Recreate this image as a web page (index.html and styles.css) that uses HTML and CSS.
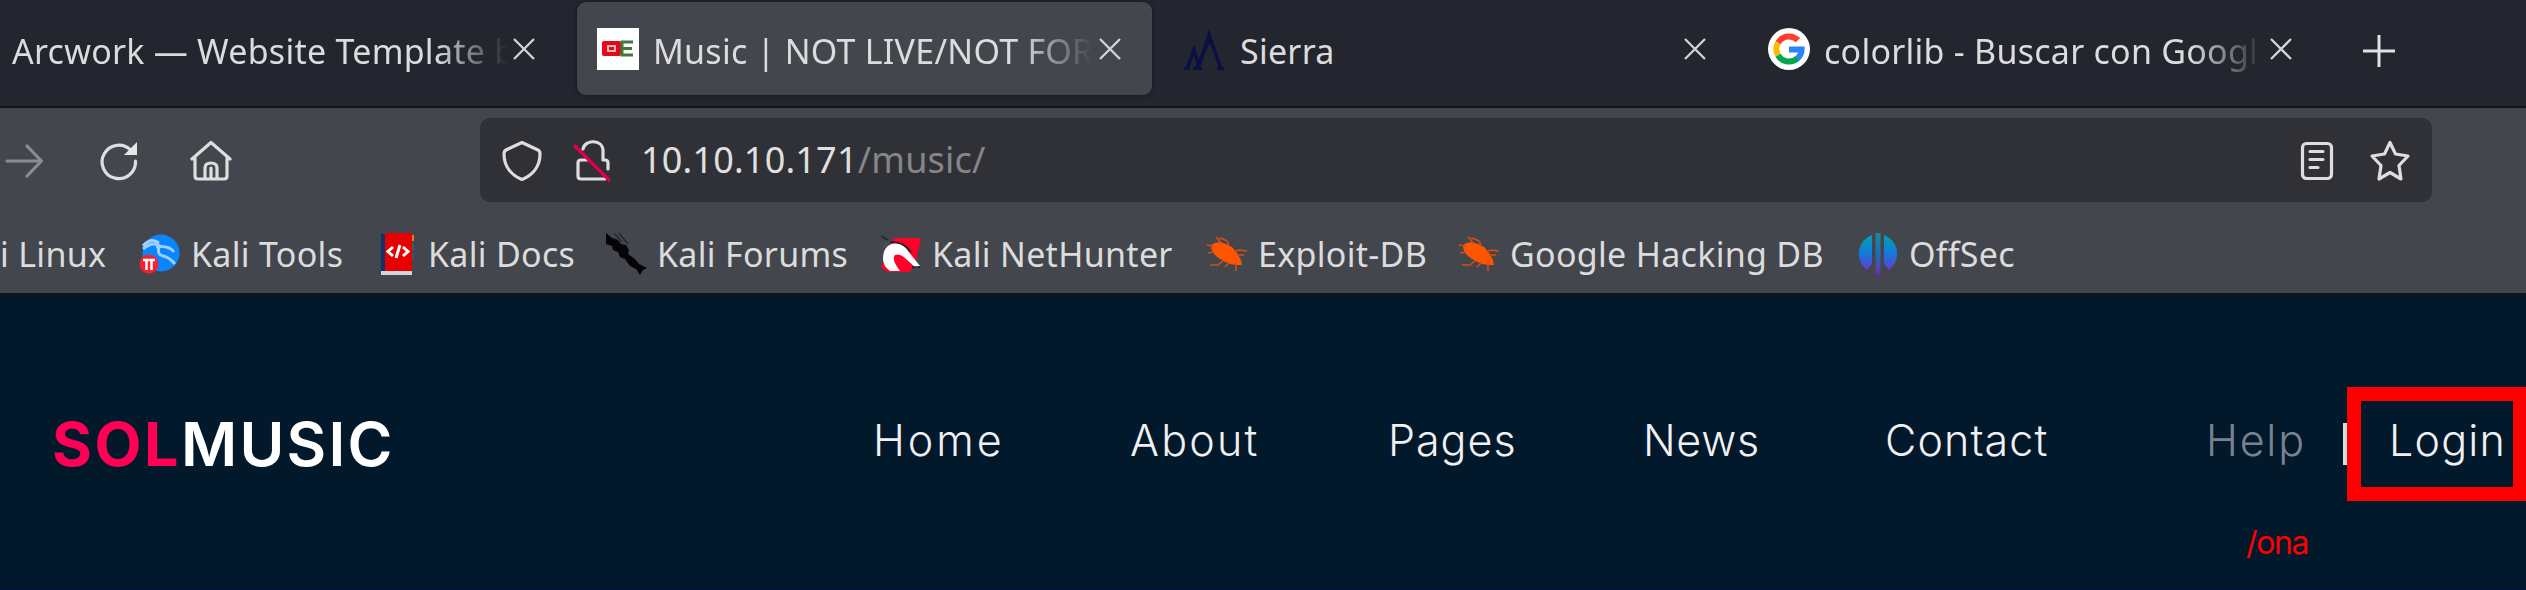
FILE: index.html
```html
<!DOCTYPE html>
<html lang="en">
<head>
<meta charset="utf-8">
<title>Music</title>
<link rel="stylesheet" href="styles.css">
</head>
<body>
<div class="window">
  <div class="tabs">
    <div class="tab tab-first">
      <span class="tab-title fade">Arcwork — Website Template b</span>
      <svg class="close" viewBox="0 0 22 22"><path d="M1 1L21 21M21 1L1 21"/></svg>
    </div>
    <div class="tab tab-active">
      <svg class="fav" viewBox="0 0 42 42"><path fill="#fff" d="M0 0h42v42H0z"/><rect x="5" y="13" width="19" height="15" rx="2" fill="#e30a17"/><path fill="none" stroke="#f4b8b8" stroke-width="2" d="M10 18h9M10 23h9M11 17v7M18 17v7"/><path fill="none" stroke="#3c7a3c" stroke-width="3" d="M36 14H25v13h11M25 20.500h10"/></svg>
      <span class="tab-title fade">Music | NOT LIVE/NOT FOR</span>
      <svg class="close" viewBox="0 0 22 22"><path d="M1 1L21 21M21 1L1 21"/></svg>
    </div>
    <div class="tab tab-sierra">
      <svg class="fav" viewBox="0 0 42 42"><path fill="none" stroke="#0a1046" stroke-width="3.500" d="M3 41L10 22L15 38L25 7L37 41M12 41L25 12M0 41h6M9 41h9M33 41h7"/></svg>
      <span class="tab-title">Sierra</span>
      <svg class="close" viewBox="0 0 22 22"><path d="M1 1L21 21M21 1L1 21"/></svg>
    </div>
    <div class="tab tab-google">
      <svg class="fav" viewBox="0 0 42 42"><circle cx="21" cy="21" r="21" fill="#fff"/><g fill="none" stroke-width="6"><path stroke="#ff3e30" d="M10.100 14.700A12.600 12.600 0 0 1 30 12.200"/><path stroke="#ffba00" d="M10.100 27.300A12.600 12.600 0 0 1 10.100 14.700"/><path stroke="#00a94b" d="M29.500 30.300A12.600 12.600 0 0 1 10.100 27.300"/><path stroke="#2684fc" d="M21 21.500h12.600Q33.500 27 29 30.800"/></g></svg>
      <span class="tab-title fade">colorlib - Buscar con Googl</span>
      <svg class="close" viewBox="0 0 22 22"><path d="M1 1L21 21M21 1L1 21"/></svg>
    </div>
    <svg class="plus" viewBox="0 0 32 32"><path d="M16 0v32M0 16h32"/></svg>
  </div>

  <div class="toolbar">
    <svg class="tool forward" viewBox="0 0 42 42"><path d="M2 21H36M22 6L36.500 21L22 36"/></svg>
    <svg class="tool reload" viewBox="0 0 42 42"><path d="M33 10.500A16.700 16.700 0 1 0 37.500 21"/><path class="solid" d="M39 2V15H26z"/></svg>
    <svg class="tool home" viewBox="0 0 42 42"><path d="M2 19L21 2.500L40 19M5 18V36q0 3 3 3H34q3 0 3-3V18M15 39V28q0-5 6-5t6 5V39M21 28v11"/></svg>
    <div class="urlbar">
      <svg class="tool shield" viewBox="0 0 42 42"><path d="M21 2.500L37 10q2 1 2 4C39 26 32 35 21 39.500C10 35 3 26 3 14q0-3 2-4z"/></svg>
      <svg class="tool lock" viewBox="0 0 42 42"><path d="M11 9C13 -1 31 -1 31 11V20M31 20h2q3 0 3 3V29M15 20H9q-3 0-3 3V36q0 3 3 3H33"/><path class="slash" d="M3 6L37 40"/></svg>
      <span class="url">10.10.10.171<span class="path">/music/</span></span>
      <svg class="tool reader" viewBox="0 0 42 42"><rect x="6.500" y="3.500" width="29" height="35" rx="4"/><path d="M14 11.500H27M14 19.500H27M14 27.500H22"/></svg>
      <svg class="tool star" viewBox="0 0 42 42"><path d="M21 2.500L26.500 14L39 16L30 25.500L32 39L21 32.500L10 39L12 25.500L3 16L15.500 14z"/></svg>
    </div>
  </div>

  <div class="bookmarks">
    <div class="mark mark-linux"><span>i Linux</span></div>
    <div class="mark mark-tools">
      <svg viewBox="0 0 42 42"><circle cx="22" cy="20" r="18.500" fill="#0a84ff"/><path fill="none" stroke="#9bd0ff" stroke-width="3" d="M4 16Q14 8 21 13M17 14Q30 12 35 19M20 14Q18 22 24 23T36 31M4 13Q12 4 20 10"/><circle cx="10" cy="31" r="9.500" fill="#f5222d"/><path fill="none" stroke="#fff" stroke-width="2.500" d="M4 27h12M7.500 27v10M12.500 27v10"/></svg>
      <span>Kali Tools</span>
    </div>
    <div class="mark mark-docs">
      <svg viewBox="0 0 42 42"><path fill="#12306e" d="M5 1h4v38H5z"/><path fill="#e60000" d="M9 0h27v38H9z"/><path fill="#df7d22" d="M36 2h2v6h-2z"/><path fill="#286a66" d="M36 11h2v6h-2z"/><path fill="#31548e" d="M36 20h2v6h-2z"/><path fill="#d6d6da" d="M5 38h31v4H5z"/><path fill="none" stroke="#fff" stroke-width="3" d="M17 14L12 18.500L17 23M27 14L32 18.500L27 23M24 12L20 25"/></svg>
      <span>Kali Docs</span>
    </div>
    <div class="mark mark-forums">
      <svg viewBox="0 0 42 42"><path fill="#050505" d="M1 0L7 5L13 7L16 11L21 12L24 17L23 21L30 26L34 31L42 35L38 37L35 42L31 36L25 33L20 26L15 24L13 19L8 17L7 13L1 11z"/><path fill="none" stroke="#26282c" stroke-width="1.500" d="M9 0L17 9M14 0L23 11"/></svg>
      <span>Kali Forums</span>
    </div>
    <div class="mark mark-hunter">
      <svg viewBox="0 0 42 42"><path fill="#ff0028" d="M14 5H39Q41 5 40.500 8L36 28L30 39H7L1 34L3 30z"/><path fill="#4a4c52" d="M14 4L3 17V12L10 7z"/><path fill="none" stroke="#24262b" stroke-width="2" d="M1 3L8 7M10 9Q23 8 31 19"/><path fill="#fff" d="M3 26C3 7 21 7 28 18L40 33L36 35L26 26Q20 20 15 22Q11 26 20 38H10Q3 33 3 26z"/><path fill="none" stroke="#17171a" stroke-width="1.500" d="M32 34h8"/></svg>
      <span>Kali NetHunter</span>
    </div>
    <div class="mark mark-exploit">
      <svg viewBox="0 0 42 42"><path fill="#ff5500" d="M5 12Q10 8 17 10Q26 12 31 20L35 27L36 32L31 32L24 31Q14 27 9 22Q5 18 5 12z"/><path fill="none" stroke="#d64e16" stroke-width="1.600" d="M8 13L1 12M8 19L2 20M16 11L10 4M22 13Q24 7 13 5M28 19L33 17L41 18M17 28L12 32L4 32M24 29L19 34M30 30V38M31 22L38 22"/></svg>
      <span>Exploit-DB</span>
    </div>
    <div class="mark mark-hacking">
      <svg viewBox="0 0 42 42"><path fill="#ff5500" d="M5 12Q10 8 17 10Q26 12 31 20L35 27L36 32L31 32L24 31Q14 27 9 22Q5 18 5 12z"/><path fill="none" stroke="#d64e16" stroke-width="1.600" d="M8 13L1 12M8 19L2 20M16 11L10 4M22 13Q24 7 13 5M28 19L33 17L41 18M17 28L12 32L4 32M24 29L19 34M30 30V38M31 22L38 22"/></svg>
      <span>Google Hacking DB</span>
    </div>
    <div class="mark mark-offsec">
      <svg viewBox="0 0 42 42"><defs><linearGradient id="os" gradientUnits="userSpaceOnUse" x1="0" y1="0" x2="0" y2="42"><stop offset="0" stop-color="#00a5ad"/><stop offset=".5" stop-color="#1478da"/><stop offset=".85" stop-color="#6140d0"/><stop offset="1" stop-color="#7a16e8"/></linearGradient></defs><path fill="url(#os)" d="M15 2V31L10 37C-1 29 -2 9 15 2zM27 2V31L32 37C43 29 44 9 27 2z"/><path fill="url(#os)" d="M18.500 0h5v42h-5z" opacity=".75"/></svg>
      <span>OffSec</span>
    </div>
  </div>

  <div class="site">
    <div class="logo"><span class="sol">SOL</span><span class="music">MUSIC</span></div>
    <nav class="menu">
      <span class="item home-link">Home</span>
      <span class="item about">About</span>
      <span class="item pages">Pages</span>
      <span class="item news">News</span>
      <span class="item contact">Contact</span>
      <span class="item help">Help</span>
      <span class="divider"></span>
      <span class="login">Login</span>
    </nav>
    <span class="note">/ona</span>
  </div>
</div>
</body>
</html>
```
FILE: styles.css
```css
* { box-sizing: border-box; }
body { margin: 0; overflow: hidden; }
.window {
  width: 2526px; height: 590px; overflow: hidden;
  display: flex; flex-direction: column;
  font-family: "Noto Sans", sans-serif; color: #dcdcdc;
  background: #02182b;
}
svg { display: block; flex: none; }
span { white-space: nowrap; }

/* tab strip */
.tabs { height: 108px; flex: none; display: flex; padding-top: 2px; background: #23252f; border-bottom: 2px solid #131418; }
.tab { height: 93px; flex: none; display: flex; align-items: center; font-size: 34px; line-height: 46px; letter-spacing: .25px; }
.tab-first { width: 577px; padding-left: 12px; }
.tab-active { width: 575px; padding-left: 20px; background: #44464d; border-radius: 9px; box-shadow: 0 0 5px rgba(0, 0, 0, .35); }
.tab-sierra { width: 591px; padding-left: 32px; }
.tab-google { width: 591px; padding-left: 25px; }
.fav { width: 42px; height: 42px; margin-right: 14px; }
.tab-title { width: 439px; overflow: hidden; padding-top: 5px; }
.tab-first .tab-title { width: 496px; margin-right: 5px; }
.tab-active .tab-title { margin-right: 7px; }
.tab-sierra .tab-title { margin-right: 5px; }
.tab-google .tab-title { margin-right: 7px; }
.fade { -webkit-mask-image: linear-gradient(to right, #000 calc(100% - 72px), transparent); mask-image: linear-gradient(to right, #000 calc(100% - 72px), transparent); }
.close { width: 22px; height: 22px; }
.close path { stroke: #d4d4d6; stroke-width: 2.3; fill: none; }
.plus { width: 32px; height: 32px; margin: 33px 0 0 29px; }
.plus path { stroke: #e2e2e2; stroke-width: 3; }

/* toolbar */
.toolbar { height: 105px; flex: none; display: flex; align-items: flex-start; padding-top: 10px; background: #44464d; }
.tool { width: 42px; height: 42px; margin-top: 22px; }
.tool path, .tool rect { fill: none; stroke: #dedede; stroke-width: 3.2; stroke-linejoin: round; stroke-linecap: round; }
.tool .solid { fill: #e6e6e6; stroke: none; }
.tool .slash { stroke: #e00048; }
.forward { margin-left: 5px; }
.forward path { stroke: #8b8c91; }
.reload { margin-left: 51px; }
.home { margin-left: 50px; }
.urlbar { width: 1952px; height: 84px; margin-left: 248px; display: flex; background: #303136; border-radius: 10px; }
.shield { margin-left: 21px; }
.lock { margin-left: 29px; }
.url { flex: 1; margin-left: 27px; font-size: 36px; line-height: 50px; letter-spacing: .2px; padding-top: 17px; color: #e0e0e0; }
.path { color: #85868a; }
.reader { margin-right: 31px; }
.star { margin-right: 21px; }

/* bookmarks */
.bookmarks { height: 82px; flex: none; display: flex; padding-top: 20px; background: #44464d; border-bottom: 2px solid #14161a; }
.mark { display: flex; gap: 10px; flex: none; font-size: 34px; line-height: 42px; letter-spacing: .3px; }
.mark svg { width: 42px; height: 42px; }
.mark-linux { width: 139px; }
.mark-tools { width: 237px; }
.mark-docs { width: 229px; }
.mark-forums { width: 275px; }
.mark-hunter { width: 326px; }
.mark-exploit { width: 252px; }
.mark-hacking { width: 399px; }

/* page header */
.site { height: 295px; flex: none; position: relative; display: flex; align-items: flex-start; background: #02182b; border-bottom: 2px solid #03143a; font-family: Inter, sans-serif; }
.logo { width: 873px; padding: 112px 0 0 52px; font-size: 61px; line-height: 74px; }
.sol { color: #ff0055; font-weight: 700; display: inline-block; width: 129px; letter-spacing: 2.5px; }
.music { color: #fff; font-weight: 600; letter-spacing: 2.2px; }
.menu { display: flex; font-size: 43px; line-height: 52px; font-weight: 300; color: #f0f0f2; }
.item { margin-top: 119px; }
.home-link { width: 257px; letter-spacing: 3px; }
.about { width: 258px; letter-spacing: 2.2px; }
.pages { width: 255px; letter-spacing: 1px; }
.news { width: 242px; letter-spacing: .7px; }
.contact { width: 321px; letter-spacing: 1.1px; }
.help { width: 137px; color: #7a8292; letter-spacing: 1.8px; }
.divider { width: 4px; height: 42px; margin-top: 128px; background: #d8dce0; }
.login { width: 179px; height: 114px; margin-top: 92px; padding: 13px 0 0 28px; border: 14px solid #f00; border-right-width: 13px; letter-spacing: 1.2px; }
.note { position: absolute; left: 2246px; top: 228px; font-size: 32px; line-height: 40px; letter-spacing: -1.4px; color: #f00; }
```
